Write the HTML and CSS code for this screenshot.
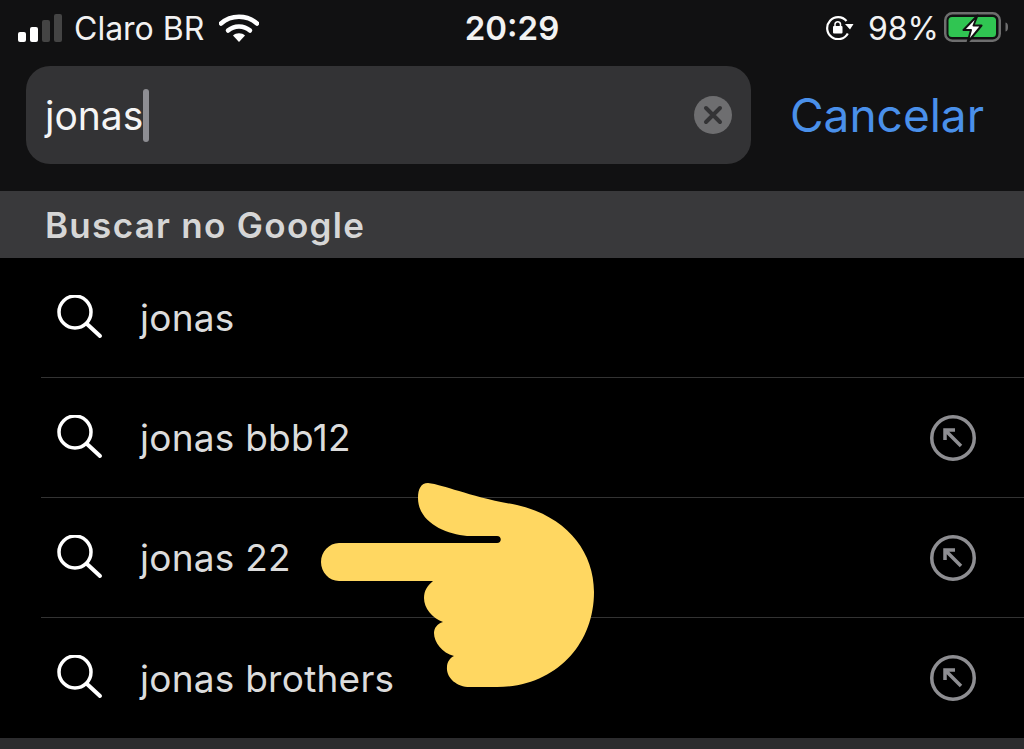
FILE: index.html
```html
<!DOCTYPE html>
<html lang="pt-BR">

<head>
    <meta charset="UTF-8">
    <meta name="viewport" content="width=device-width, initial-scale=1.0">
    <title>Buscar</title>
    <link rel="stylesheet" href="styles.css">
</head>

<body>
    <div class="top">
        <div class="status">
            <div class="status-left">
                <div class="signal">
                    <span class="bar bar1"></span>
                    <span class="bar bar2"></span>
                    <span class="bar bar3"></span>
                    <span class="bar bar4"></span>
                </div>
                <span class="carrier">Claro BR</span>
                <svg class="wifi" viewBox="0 0 40 30">
                    <path d="M2 10.500C12 1.500 28 1.500 38 10.500" fill="none" stroke="#fff" stroke-width="4.500" stroke-linecap="round" />
                    <path d="M9 17.500C15 12 25 12 31 17.500" fill="none" stroke="#fff" stroke-width="4.500" stroke-linecap="round" />
                    <path d="M14 22.500C17 19.500 23 19.500 26 22.500L20 29Z" fill="#fff" />
                </svg>
            </div>
            <span class="time">20:29</span>
            <div class="status-right">
                <svg class="lock" viewBox="0 0 30 24">
                    <path d="M22.800 17.500A11 11 0 1 1 21.500 5" fill="none" stroke="#fff" stroke-width="2.200" />
                    <path d="M20 8L28.500 8L25 13.500Z" fill="#fff" />
                    <rect x="8" y="10" width="9.500" height="7.500" rx="1" fill="#fff" />
                    <path d="M10 10.500V8a2.800 2.800 0 0 1 5.500 0V10.500" fill="none" stroke="#fff" stroke-width="1.500" />
                </svg>
                <span class="percent">98%</span>
                <svg class="battery" viewBox="0 0 65 30">
                    <rect x="1.250" y="1.250" width="54.500" height="27.500" rx="7" fill="none" stroke="#6e6e6e" stroke-width="2.500" />
                    <rect x="4.500" y="5" width="47.500" height="20" rx="3.500" fill="#30c552" />
                    <path d="M61.500 10.500c2 .5 2.500 2 2.500 4.500s-.5 4-2.500 4.500Z" fill="#6e6e6e" />
                    <path d="M33.500 3.500L19.500 18H27L23.500 30.500L37.500 13.500H29.500Z" fill="#fff" stroke="#111" stroke-width="2" stroke-linejoin="round" />
                </svg>
            </div>
        </div>
        <div class="search-row">
            <div class="search-box">
                <span class="query">jonas</span>
                <span class="caret"></span>
                <svg class="clear" viewBox="0 0 38 38">
                    <circle cx="19" cy="19" r="19" fill="#6e6e70" />
                    <path d="M12 12L26 26M26 12L12 26" stroke="#333335" stroke-width="4" stroke-linecap="round" />
                </svg>
            </div>
            <span class="cancel">Cancelar</span>
        </div>
    </div>

    <div class="section">Buscar no Google</div>

    <ul class="results">
        <li class="result">
            <svg class="mag" viewBox="0 0 46 46">
                <circle cx="18" cy="17" r="16" fill="none" stroke="#fff" stroke-width="3.500" />
                <path d="M30 29L43 41" stroke="#fff" stroke-width="4" stroke-linecap="round" />
            </svg>
            <span class="label">jonas</span>
        </li>
        <li class="result">
            <svg class="mag" viewBox="0 0 46 46">
                <circle cx="18" cy="17" r="16" fill="none" stroke="#fff" stroke-width="3.500" />
                <path d="M30 29L43 41" stroke="#fff" stroke-width="4" stroke-linecap="round" />
            </svg>
            <span class="label">jonas bbb12</span>
            <svg class="fill-in" viewBox="0 0 46 46">
                <circle cx="23" cy="23" r="21.250" fill="none" stroke="#8e8e92" stroke-width="3.500" />
                <path d="M31 31L15.500 15.500M15 25V15H25" fill="none" stroke="#8e8e92" stroke-width="3.500" />
            </svg>
        </li>
        <li class="result">
            <svg class="mag" viewBox="0 0 46 46">
                <circle cx="18" cy="17" r="16" fill="none" stroke="#fff" stroke-width="3.500" />
                <path d="M30 29L43 41" stroke="#fff" stroke-width="4" stroke-linecap="round" />
            </svg>
            <span class="label">jonas 22</span>
            <svg class="fill-in" viewBox="0 0 46 46">
                <circle cx="23" cy="23" r="21.250" fill="none" stroke="#8e8e92" stroke-width="3.500" />
                <path d="M31 31L15.500 15.500M15 25V15H25" fill="none" stroke="#8e8e92" stroke-width="3.500" />
            </svg>
        </li>
        <li class="result">
            <svg class="mag" viewBox="0 0 46 46">
                <circle cx="18" cy="17" r="16" fill="none" stroke="#fff" stroke-width="3.500" />
                <path d="M30 29L43 41" stroke="#fff" stroke-width="4" stroke-linecap="round" />
            </svg>
            <span class="label">jonas brothers</span>
            <svg class="fill-in" viewBox="0 0 46 46">
                <circle cx="23" cy="23" r="21.250" fill="none" stroke="#8e8e92" stroke-width="3.500" />
                <path d="M31 31L15.500 15.500M15 25V15H25" fill="none" stroke="#8e8e92" stroke-width="3.500" />
            </svg>
        </li>
    </ul>

    <div class="bottom"></div>

    <!-- emoji pasted on top of the screenshot -->
    <svg class="hand" viewBox="0 0 1024 749">
        <path fill="#ffd761" d="M428 483C445 485 470 497 517 505C565 516 594 550 594 592C594 645 555 687 497 687H470C456 687 446 677 447 667C447 662 450 658 454 656C442 653 434 642 434 633C434 628 437 624 443 622C432 618 424 608 424 598C424 591 427 586 433 581H339C329 581 321 572 321 562C321 552 329 543 339 543H497C502 543 502 536 497 536H467C445 534 418 522 418 498C418 489 421 483 428 483Z" />
    </svg>
</body>

</html>
```

FILE: styles.css
```css
* {
    box-sizing: border-box;
}

body {
    margin: 0;
    height: 749px;
    overflow: hidden;
    background-color: #000;
    color: white;
    font-family: Inter, 'Liberation Sans', sans-serif;
}

.top {
    height: 191px;
    background-color: #111112;
}

.status {
    height: 56px;
    display: grid;
    grid-template-columns: 1fr auto 1fr;
    align-items: center;
    font-size: 32px;
    color: #f2f2f2;
}

.status-left {
    display: flex;
    align-items: center;
    padding-left: 18px;
}

.signal {
    display: flex;
    align-items: flex-end;
    gap: 4px;
    height: 28px;
}

.bar {
    width: 8px;
    border-radius: 2px;
    background-color: #fff;
}

.bar1 {
    height: 10px;
}

.bar2 {
    height: 15px;
}

.bar3 {
    height: 22px;
    background-color: #444;
}

.bar4 {
    height: 28px;
    background-color: #444;
}

.carrier {
    margin-left: 12px;
}

.wifi {
    width: 40px;
    height: 30px;
    margin-left: 15px;
}

.time {
    font-size: 33px;
    font-weight: 600;
}

.status-right {
    display: flex;
    align-items: center;
    justify-content: flex-end;
    padding-right: 15px;
}

.lock {
    width: 30px;
    height: 24px;
}

.percent {
    margin-left: 13px;
}

.battery {
    width: 65px;
    height: 30px;
    margin-left: 5px;
    margin-bottom: 2px;
}

.search-row {
    display: flex;
    align-items: center;
    margin-top: 10px;
    padding-left: 26px;
}

.search-box {
    width: 725px;
    height: 98px;
    display: flex;
    align-items: center;
    padding: 0 19px;
    border-radius: 24px;
    background-color: #333335;
    font-size: 39px;
}

.query {
    color: #f5f5f5;
}

.caret {
    width: 6px;
    height: 53px;
    border-radius: 3px;
    background-color: #8e8e93;
}

.clear {
    width: 38px;
    height: 38px;
    margin-left: auto;
}

.cancel {
    margin-left: 39px;
    font-size: 46px;
    color: #4a90ea;
}

.section {
    height: 67px;
    display: flex;
    align-items: center;
    padding-left: 45px;
    background-color: #39393b;
    color: #d6d6d6;
    font-size: 35px;
    font-weight: 600;
    letter-spacing: 1.300px;
}

.results {
    list-style: none;
    margin: 0;
    padding: 0;
}

.result {
    height: 120px;
    margin-left: 41px;
    padding-left: 16px;
    padding-right: 48px;
    display: flex;
    align-items: center;
    border-bottom: 1px solid #333;
    color: #dcdcdc;
    font-size: 37px;
    letter-spacing: 0.250px;
}

.result:last-child {
    border-bottom: none;
}

.mag {
    width: 46px;
    height: 46px;
    flex: none;
}

.label {
    margin-left: 37px;
}

.fill-in {
    width: 46px;
    height: 46px;
    margin-left: auto;
}

.bottom {
    height: 11px;
    background-color: #2c2c2e;
}

.hand {
    position: absolute;
    left: 0;
    top: 0;
    width: 1024px;
    height: 749px;
}
```
